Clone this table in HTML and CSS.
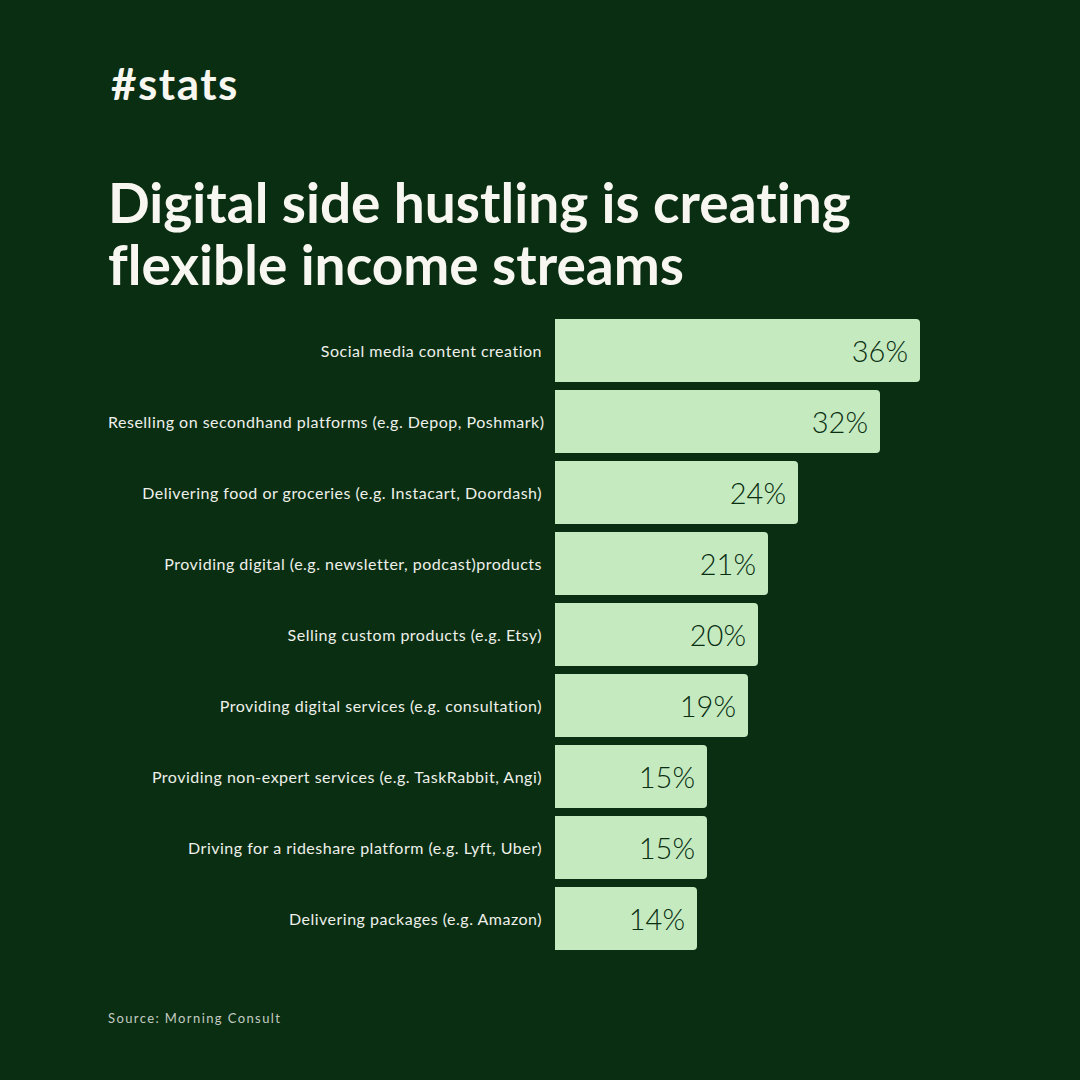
FILE: index.html
```html
<!DOCTYPE html>
<html>
<head>
<meta charset="utf-8">
<link rel="stylesheet" href="styles.css">
</head>
<body>
<main class="page">
  <div class="tag">#stats</div>
  <h1 class="headline">Digital side hustling is creating<br>flexible income streams</h1>
  <div class="chart">
    <div class="label">Social media content creation</div>
    <div class="track"><div class="bar" style="width:365px">36%</div></div>
    <div class="label">Reselling on secondhand platforms (e.g. Depop, Poshmark)</div>
    <div class="track"><div class="bar" style="width:325px">32%</div></div>
    <div class="label">Delivering food or groceries (e.g. Instacart, Doordash)</div>
    <div class="track"><div class="bar" style="width:243px">24%</div></div>
    <div class="label">Providing digital (e.g. newsletter, podcast)products</div>
    <div class="track"><div class="bar" style="width:213px">21%</div></div>
    <div class="label">Selling custom products (e.g. Etsy)</div>
    <div class="track"><div class="bar" style="width:203px">20%</div></div>
    <div class="label">Providing digital services (e.g. consultation)</div>
    <div class="track"><div class="bar" style="width:193px">19%</div></div>
    <div class="label">Providing non-expert services (e.g. TaskRabbit, Angi)</div>
    <div class="track"><div class="bar" style="width:152px">15%</div></div>
    <div class="label">Driving for a rideshare platform (e.g. Lyft, Uber)</div>
    <div class="track"><div class="bar" style="width:152px">15%</div></div>
    <div class="label">Delivering packages (e.g. Amazon)</div>
    <div class="track"><div class="bar" style="width:142px">14%</div></div>
  </div>
  <div class="source">Source: Morning Consult</div>
</main>
</body>
</html>
```
FILE: styles.css
```css
html, body {
  margin: 0;
  padding: 0;
}
body {
  background: #0a2e12;
}
.page {
  width: 1080px;
  height: 1080px;
  box-sizing: border-box;
  padding: 58px 0 0 108px;
  background: #0a2e12;
  font-family: "Lato", "Liberation Sans", sans-serif;
  color: #f8f6f0;
  font-variant-ligatures: none;
}
.tag {
  font-size: 44px;
  font-weight: 700;
  line-height: 50px;
  letter-spacing: 1.5px;
  margin-left: 3px;
}
.headline {
  margin: 63px 0 0 0;
  font-size: 55px;
  font-weight: 700;
  line-height: 62px;
  letter-spacing: 0;
}
.chart {
  margin-top: 24px;
  display: grid;
  grid-template-columns: 447px 1fr;
  row-gap: 8px;
}
.label {
  font-size: 16px;
  letter-spacing: 0.5px;
  color: #eef0ea;
  text-align: right;
  padding-right: 13px;
  align-self: center;
  white-space: nowrap;
}
.track {
  height: 63px;
  display: flex;
}
.bar {
  background: #c5eac0;
  border-radius: 0 4px 4px 0;
  box-sizing: border-box;
  padding-right: 12px;
  display: flex;
  align-items: center;
  justify-content: flex-end;
  font-size: 29px;
  font-weight: 300;
  color: #0a2e12;
}
.source {
  margin-top: 60px;
  font-size: 13px;
  letter-spacing: 1.4px;
  color: #c3cbc2;
}
```
